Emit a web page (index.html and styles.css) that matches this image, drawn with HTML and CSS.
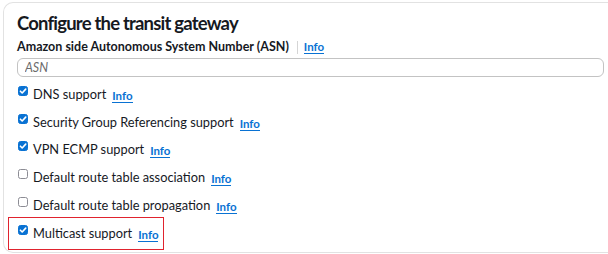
FILE: index.html
```html
<!DOCTYPE html>
<html lang="en">
<head>
    <meta charset="UTF-8">
    <meta name="viewport" content="width=device-width, initial-scale=1.0">
    <title>Configure the transit gateway</title>
    <link rel="stylesheet" href="styles.css">
</head>
<body>
    <div class="panel">
        <h2>Configure the transit gateway</h2>

        <div class="field">
            <div class="field-label">
                <span>Amazon side Autonomous System Number (ASN)</span>
                <span class="divider"></span>
                <a href="#" class="info">Info</a>
            </div>
            <input type="text" class="asn-input" placeholder="ASN">
        </div>

        <div class="options" id="options"></div>
    </div>

    <script>
        const options = [
            { label: "DNS support", checked: true },
            { label: "Security Group Referencing support", checked: true },
            { label: "VPN ECMP support", checked: true },
            { label: "Default route table association", checked: false },
            { label: "Default route table propagation", checked: false },
            { label: "Multicast support", checked: true, highlight: true }
        ];

        const optionsContainer = document.getElementById('options');

        options.forEach(option => {
            const row = document.createElement('div');
            row.className = option.highlight ? 'option highlight' : 'option';
            row.innerHTML = `
                <span class="box ${option.checked ? 'checked' : ''}">
                    ${option.checked ? '<svg viewBox="0 0 10 10" width="10" height="10"><path d="M2.4 5.2 L4.2 7 L7.7 3.1" fill="none" stroke="#fff" stroke-width="1.6" stroke-linecap="round" stroke-linejoin="round"/></svg>' : ''}
                </span>
                <span class="option-text">${option.label}</span>
                <a href="#" class="info">Info</a>
            `;
            optionsContainer.appendChild(row);
        });
    </script>
</body>
</html>
```

FILE: styles.css
```css
* {
    margin: 0;
    padding: 0;
    box-sizing: border-box;
    font-family: 'Lato', Arial, sans-serif;
}

body {
    background-color: #ffffff;
    color: #16191f;
    padding: 2px 0 0 3px;
}

a {
    text-decoration: none;
}

.panel {
    border: 1px solid #e2e2e2;
    border-right: none;
    border-radius: 10px 0 0 10px;
    height: 251px;
    padding: 9px 0 0 13px;
}

.panel h2 {
    font-size: 18.5px;
    font-weight: 700;
    line-height: 22px;
    letter-spacing: -0.8px;
}

.field {
    margin-top: 5px;
}

.field-label {
    display: flex;
    align-items: center;
    font-size: 12.5px;
    font-weight: 700;
    line-height: 16px;
}

.divider {
    width: 1px;
    height: 13px;
    background: #d5d5d5;
    margin: 0 6px 0 8px;
}

.info {
    color: #0972d3;
    font-weight: 700;
    font-size: 11.5px;
    border-bottom: 1px solid #0972d3;
    line-height: 13px;
}

.asn-input {
    display: block;
    width: 587px;
    height: 19px;
    margin-top: 3px;
    border: 1px solid #c3c3c3;
    border-radius: 6px;
    padding: 0 7px;
    font-size: 12.5px;
    outline: none;
}

.asn-input::placeholder {
    color: #6b6b6b;
    font-style: italic;
}

.options {
    display: flex;
    flex-direction: column;
    align-items: flex-start;
    margin-top: 3px;
}

.option {
    display: flex;
    align-items: center;
    height: 27.8px;
    font-size: 12.8px;
}

.option .box {
    width: 10px;
    height: 10px;
    border: 1px solid #8c8c94;
    border-radius: 2.5px;
    margin: -6px 5px 0 1px;
    display: flex;
}

.option .box.checked {
    background: #0972d3;
    border-color: #0972d3;
}

.option .box svg {
    margin: -1px;
    flex-shrink: 0;
}

.option-text {
    margin-right: 6px;
}

.option .info {
    margin-top: 4px;
}

.highlight {
    border: 1.5px solid #e0232e;
    margin-left: -9px;
    padding: 0 5px 0 8px;
    height: 33px;
    margin-top: -2px;
}
```
